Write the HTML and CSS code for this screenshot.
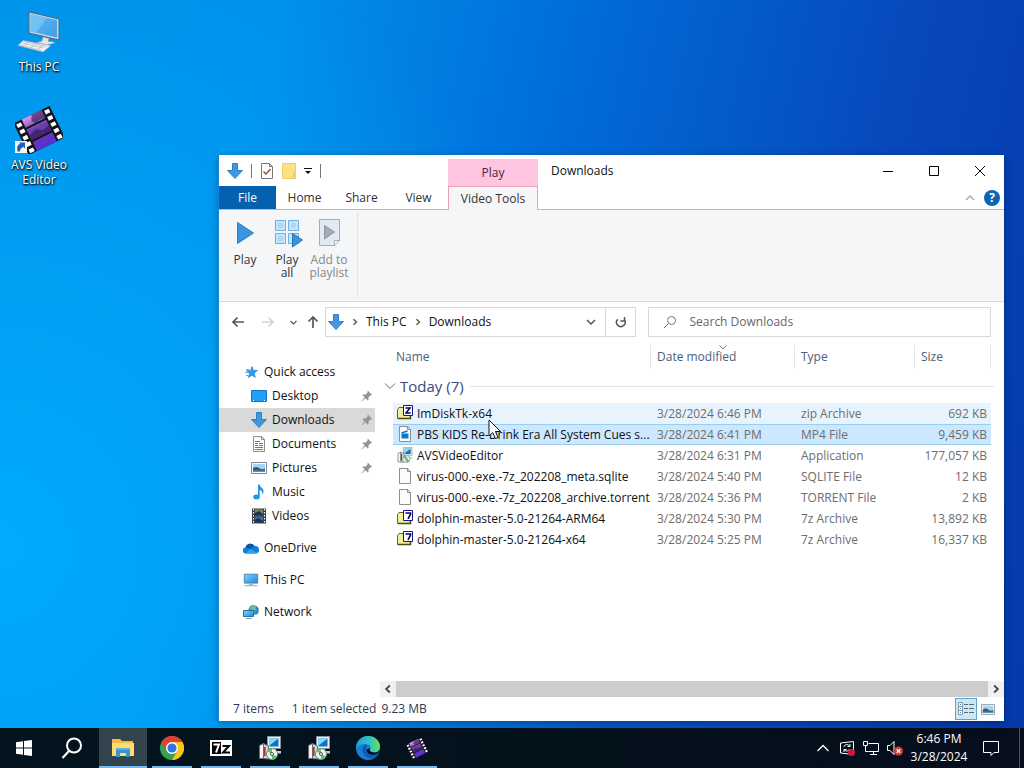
FILE: index.html
```html
<!DOCTYPE html>
<html lang="en">
<head>
    <meta charset="UTF-8">
    <meta name="viewport" content="width=device-width, initial-scale=1.0">
    <title>Downloads</title>
    <link rel="stylesheet" href="styles.css">
</head>
<body>
    <!-- Shared icons -->
    <svg class="sprite" aria-hidden="true">
        <defs>
            <linearGradient id="g-blue" x1="0" y1="0" x2="1" y2="1">
                <stop offset="0" stop-color="#7fd0fb"/><stop offset="1" stop-color="#1d8be0"/>
            </linearGradient>
            <linearGradient id="g-screen" x1="0" y1="0" x2="1" y2="1">
                <stop offset="0" stop-color="#63b9f2"/><stop offset="1" stop-color="#3f9fe6"/>
            </linearGradient>
            <linearGradient id="g-film" x1="0" y1="0" x2="0" y2="1">
                <stop offset="0" stop-color="#d99af0"/><stop offset=".4" stop-color="#6a3fa8"/><stop offset="1" stop-color="#5a2fd0"/>
            </linearGradient>
            <linearGradient id="g-edge" x1="0" y1="0" x2="1" y2="0">
                <stop offset="0" stop-color="#1b9de2"/><stop offset=".55" stop-color="#2fc3c4"/><stop offset="1" stop-color="#6bdc5a"/>
            </linearGradient>
        </defs>
        <symbol id="i-down" viewBox="0 0 16 16">
            <path d="M5.5.5h5v7h5L8 15.5.5 7.5h5z" fill="#3f98e0" stroke="#2f7fc6"/>
        </symbol>
        <symbol id="i-chev-right" viewBox="0 0 8 8">
            <path d="M2.5 1.2 5.5 4 2.5 6.8" fill="none" stroke="currentColor" stroke-width="1.4"/>
        </symbol>
        <symbol id="i-chev-down" viewBox="0 0 12 12">
            <path d="M2 4l4 4 4-4" fill="none" stroke="currentColor" stroke-width="1.5"/>
        </symbol>
        <symbol id="i-arrow" viewBox="0 0 14 14">
            <path d="M13 7H2M6.500 2.500 2 7l4.500 4.500" fill="none" stroke="currentColor" stroke-width="1.700"/>
        </symbol>
        <symbol id="i-pin" viewBox="0 0 12 12">
            <path d="M7 .8 11.200 5l-1 .6-.8-.2-2 2 .2 2.200-.9.9L4.300 8.200 1 11.200l-.4-.4 3-3.300L1.400 5.300l.9-.9 2.300.2 2-2-.2-.8z" fill="#8f959b"/>
        </symbol>
        <symbol id="i-monitor" viewBox="0 0 18 16">
            <path d="M1.500 1.500h15v10h-15z" fill="url(#g-blue)" stroke="#3d7fae"/>
            <path d="M6.500 12h5v1.500h-5z" fill="#9fb2bf"/><path d="M2 14.500h14" stroke="#7f97a6"/>
        </symbol>
        <symbol id="i-picture" viewBox="0 0 16 12">
            <path d="M.5.5h15v11H.5z" fill="#fff" stroke="#7c8b98"/>
            <path d="M2 2h12v8H2z" fill="#a9d2ee"/><path d="M2 6c3-2 5-1 7 .5S12.500 7 14 6.500V10H2z" fill="#355d78"/><path d="M2 8.500h12V10H2z" fill="#5e93b8"/>
        </symbol>
        <symbol id="i-page" viewBox="0 0 16 16">
            <path d="M2.500.5h8l3 3v12h-11z" fill="#fbfbfb" stroke="#8e8e8e"/><path d="M10.500.5v3h3" fill="none" stroke="#8e8e8e"/>
        </symbol>
        <symbol id="i-archive" viewBox="0 0 16 16">
            <path d="M.5 4.500 2 2.500h4l1 2h6.500v9H.5z" fill="#f2ee9c" stroke="#67631c"/>
            <path d="M1 13.500h12.500V11" fill="none" stroke="#4c4a12" stroke-width="1.500"/>
            <path d="M6.500.5h9v10h-9z" fill="#fff" stroke="#15158a"/>
        </symbol>
        <symbol id="i-seven" viewBox="0 0 16 16">
            <use href="#i-archive"/><path d="M8.500 3h5v1.200L11 8.800" fill="none" stroke="#000070" stroke-width="1.600"/>
        </symbol>
        <symbol id="i-zip" viewBox="0 0 16 16">
            <use href="#i-archive"/><path d="M8.500 3h4.500L9 8h4.700" fill="none" stroke="#000070" stroke-width="1.500"/>
        </symbol>
        <symbol id="i-setup" viewBox="0 0 24 24">
            <path d="M9.500.5h13v12h-13z" fill="#eef0f1" stroke="#8b9196"/>
            <path d="M11.500 2.500h9v8h-9z" fill="#0b74c4"/><path d="M11.500 2.500h9l-9 7z" fill="#7fdcff"/>
            <path d="M14 13h4v2h5v2.500h-9z" fill="#c9ced2"/>
            <path d="M1.500 9.500 5.500 7.500v15H1.500z" fill="#f5f5f5" stroke="#6a6a6a"/>
            <path d="M5.500 7.500 10.500 10v13l-5-.5z" fill="#cfd1d3" stroke="#6a6a6a"/><path d="M6.800 11v9" stroke="#b3262c" stroke-width="1.500"/>
            <circle cx="14" cy="18" r="5.500" fill="#eef5ee" stroke="#6f8f75"/>
            <path d="M14 18l-4.700-2.500A5 5 0 0 1 14 12.800zM14 18l4.700 2.500A5 5 0 0 1 14 23.200z" fill="#5cc274"/>
            <circle cx="14" cy="18" r="1.500" fill="#fff" stroke="#555"/>
        </symbol>
        <symbol id="i-film" viewBox="0 0 48 48">
            <g transform="rotate(-26 24 24)">
                <path d="M4 7h40v35H4z" fill="#15111c"/>
                <path d="M13 7h22v9H13zM13 18h22v12H13zM13 32h22v10H13z" fill="url(#g-film)"/>
                <path d="M24 7h11v9l-5-1-6 1-3-3zM13 25l8-3 7 4 7-2v6H13z" fill="#2b1748" opacity=".6"/>
                <path d="M6 9h5v4H6zM6 16h5v4H6zM6 23h5v4H6zM6 30h5v4H6zM6 37h5v4H6zM37 9h5v4h-5zM37 16h5v4h-5zM37 23h5v4h-5zM37 30h5v4h-5zM37 37h5v4h-5z" fill="#fff"/>
            </g>
        </symbol>
    </svg>

    <main class="desktop">
        <nav class="shortcuts">
            <a class="shortcut" href="#this-pc">
                <svg width="48" height="48" viewBox="0 0 48 48">
                    <path d="M14 4l30 7v21l-30-7z" fill="#c5d8e4" stroke="#4d6577"/>
                    <path d="M15.500 6 42 12v17.500l-26.500-6z" fill="url(#g-screen)"/><path d="M15.500 6 32 9.700 21 24.800l-5.500-1.300z" fill="#8fd0f7" opacity=".5"/>
                    <path d="M28 29l6 1.500-1 3h4l3 1.500-9 2-9-2.500 5-1.500z" fill="#e2e6e9" stroke="#94a0a8" stroke-width=".5"/>
                    <path d="M8 32.500l28 5-8 6.500L3 37.500z" fill="#f2f2f2" stroke="#9aa3aa" stroke-width=".6"/>
                    <path d="M7 35l22 5M9 33.500l23 5M5 37l22 5.500M14 33.500l-6 5M22 35l-7 5.500M29 36l-7 6" stroke="#aeb6bb" stroke-width=".7"/>
                </svg>
                <span>This PC</span>
            </a>
            <a class="shortcut" href="#avs">
                <svg width="48" height="48" viewBox="0 0 48 48">
                    <use href="#i-film"/>
                    <path d="M0 35h12v12H0z" fill="#f5f5f5"/><path d="M2.500 45.500c-1-5 .5-7.500 3-7.500L4 36.500h6v6L8.500 41c-2 .5-3.500 2-3.500 4.500z" fill="#1f5fae"/>
                </svg>
                <span>AVS Video Editor</span>
            </a>
        </nav>

        <section class="window">
            <header class="window-head">
                <div class="quick-bar">
                    <svg width="16" height="16"><use href="#i-down"/></svg>
                    <span class="bar"></span>
                    <button aria-label="Properties">
                        <svg width="14" height="16" viewBox="0 0 14 16"><path d="M1.500.5h8l3 3v12h-11z" fill="#fff" stroke="#777"/><path d="M9.500.5v3h3" fill="none" stroke="#777"/><path d="M3.500 8.500l2.500 2.500 4.500-5" fill="none" stroke="#8a4a30" stroke-width="1.300"/></svg>
                    </button>
                    <button aria-label="New folder">
                        <svg width="14" height="16" viewBox="0 0 14 16"><path d="M.5.5h13v15H.5z" fill="#fbe184" stroke="#ecd069"/><path d="M11 9h2.500v6.500H11z" fill="#f3cf60"/></svg>
                    </button>
                    <button aria-label="Customize toolbar">
                        <svg width="8" height="8" viewBox="0 0 8 8"><path d="M0 1.500h8" stroke="#111"/><path d="M1 4h6L4 7z" fill="#111"/></svg>
                    </button>
                    <span class="bar"></span>
                </div>
                <div class="context-tab">Play</div>
                <div class="title-bar">
                    <h1>Downloads</h1>
                    <button class="caption" aria-label="Minimize"><svg width="10" height="10"><path d="M0 5.500h10" stroke="#000"/></svg></button>
                    <button class="caption" aria-label="Maximize"><svg width="10" height="10"><path d="M.5.5h9v9h-9z" fill="none" stroke="#000"/></svg></button>
                    <button class="caption" aria-label="Close"><svg width="10" height="10"><path d="M0 0l10 10M10 0 0 10" stroke="#000"/></svg></button>
                </div>
                <div class="tabs">
                    <button class="tab file">File</button>
                    <button class="tab">Home</button>
                    <button class="tab">Share</button>
                    <button class="tab">View</button>
                </div>
                <button class="tab active">Video Tools</button>
                <div class="tab-tools">
                    <button aria-label="Minimize the ribbon"><svg width="10" height="8" viewBox="0 0 10 8"><path d="M1 6l4-4 4 4" fill="none" stroke="#a8adb2" stroke-width="1.500"/></svg></button>
                    <button class="help" aria-label="Help">?</button>
                </div>
            </header>

            <div class="ribbon">
                <div class="ribbon-group">
                    <button class="ribbon-button">
                        <svg width="32" height="32" viewBox="0 0 32 32"><path d="M8.500 5.500l16 10.500-16 10.500z" fill="#3c94df" stroke="#2a7cc4"/></svg>
                        <span>Play</span>
                    </button>
                    <button class="ribbon-button">
                        <svg width="32" height="32" viewBox="0 0 32 32">
                            <path d="M4.500 3.500h10v10h-10zM17.500 3.500h10v10h-10zM4.500 16.500h10v10h-10zM17.500 16.500h10v10h-10z" fill="#c4e6fa" stroke="#6fb1dc"/>
                            <path d="M7 6h5v5H7zM20 6h5v5h-5zM7 19h5v5H7z" fill="#a9d9f6"/>
                            <path d="M21.500 16.500l10 6.500-10 7z" fill="#3c94df" stroke="#2a72b8"/>
                        </svg>
                        <span>Play all</span>
                    </button>
                    <button class="ribbon-button" disabled>
                        <svg width="32" height="32" viewBox="0 0 32 32">
                            <path d="M6.500 2.500h20v21l-5 5h-15z" fill="#e3e9f1" stroke="#a2adba"/><path d="M21.500 28.500v-5h5z" fill="#fff" stroke="#a2adba"/>
                            <path d="M11.500 8.500l10 6.500-10 7z" fill="#a3abb6" stroke="#8f98a5"/>
                        </svg>
                        <span>Add to playlist</span>
                    </button>
                </div>
            </div>

            <div class="nav-bar">
                <button class="nav-button" aria-label="Back"><svg width="14" height="14"><use href="#i-arrow"/></svg></button>
                <button class="nav-button" aria-label="Forward" disabled><svg class="flip" width="14" height="14"><use href="#i-arrow"/></svg></button>
                <button class="nav-button narrow" aria-label="Recent locations"><svg width="9" height="9"><use href="#i-chev-down"/></svg></button>
                <button class="nav-button narrow" aria-label="Up"><svg class="up" width="14" height="14"><use href="#i-arrow"/></svg></button>
                <div class="address">
                    <svg width="16" height="16"><use href="#i-down"/></svg>
                    <svg width="8" height="8"><use href="#i-chev-right"/></svg>
                    <a href="#this-pc">This PC</a>
                    <svg width="8" height="8"><use href="#i-chev-right"/></svg>
                    <a href="#downloads">Downloads</a>
                    <button class="address-drop" aria-label="Previous locations"><svg width="12" height="12"><use href="#i-chev-down"/></svg></button>
                    <button class="refresh" aria-label="Refresh">
                        <svg width="12" height="12" viewBox="0 0 12 12"><path d="M2.800 3.200A4.300 4.300 0 1 0 9.500 4" fill="none" stroke="currentColor" stroke-width="1.500"/><path d="M2.500 1v4h4" fill="none" stroke="currentColor" stroke-width="1.500" transform="matrix(-1 0 0 1 12 0)"/></svg>
                    </button>
                </div>
                <label class="search">
                    <svg width="14" height="14" viewBox="0 0 14 14"><circle cx="8.500" cy="5.500" r="4" fill="none" stroke="#777"/><path d="M5.500 8.500 1 13" stroke="#777"/></svg>
                    <input type="text" aria-label="Search Downloads" placeholder="Search Downloads">
                </label>
            </div>

            <div class="window-body">
                <nav class="sidebar">
                    <a class="root" href="#quick"><svg width="16" height="16" viewBox="0 0 16 16"><path d="M9 2.500l1.300 3.700 4.200.3-3.300 2.700 1.200 4.300L9 11.300 5.200 13.500 6.500 9.500 3.500 6.700l4.200-.5z" fill="#2e9be6" stroke="#1c7fc7" stroke-width=".6"/><path d="M3 5.500h3M2 8.500h3M3 11.500h2" stroke="#5eb2e8"/></svg>Quick access</a>
                    <a href="#desktop"><svg width="16" height="16" viewBox="0 0 16 16"><path d="M.5 2.500h15v11H.5z" fill="#1ea0fb" stroke="#1474bd"/><path d="M2 12.500h1M13 12.500h1" stroke="#fff"/></svg>Desktop<svg class="pin" width="12" height="12"><use href="#i-pin"/></svg></a>
                    <a class="current" href="#downloads"><svg width="16" height="16"><use href="#i-down"/></svg>Downloads<svg class="pin" width="12" height="12"><use href="#i-pin"/></svg></a>
                    <a href="#documents"><svg width="16" height="16"><use href="#i-page"/><path d="M4 5.500h5M4 7.500h3M8 7.500h4M4 9.500h3M8 9.500h4M4 11.500h8M4 13.500h8" stroke="#2a93bd"/></svg>Documents<svg class="pin" width="12" height="12"><use href="#i-pin"/></svg></a>
                    <a href="#pictures"><svg width="16" height="12"><use href="#i-picture"/></svg>Pictures<svg class="pin" width="12" height="12"><use href="#i-pin"/></svg></a>
                    <a href="#music"><svg width="16" height="16" viewBox="0 0 16 16"><ellipse cx="5.500" cy="13" rx="3.200" ry="2.500" fill="#1d97e8"/><path d="M7 13V.5h1.700c.3 3 4.300 3.500 3.800 7.500-.2 1-.7 2-1.200 2.500.3-2.500-.8-4-2.600-4.500v7z" fill="#1d97e8"/></svg>Music</a>
                    <a href="#videos"><svg width="16" height="16" viewBox="0 0 16 16"><path d="M1 .5h14v15H1z" fill="#39424c"/><path d="M4 1.500h8v6H4z" fill="#7e8a52"/><path d="M4 8.500h8v6H4z" fill="#3e6b9c"/><path d="M4 5l4-2 4 3v1.500H4zM4 12l3-2 5 3v1.500H4z" fill="#20304e"/><path d="M2.500 1v14M13.500 1v14" stroke="#fff" stroke-dasharray="1.500 1.500"/></svg>Videos</a>
                    <a class="root spaced" href="#onedrive"><svg width="16" height="16" viewBox="0 0 16 16"><path d="M3 13.500a3 3 0 0 1-.5-6 5 5 0 0 1 9-1.500 3.800 3.800 0 0 1 1.500 7.500z" fill="#1180d8"/><path d="M2.500 7.500a5 5 0 0 1 9-1.500L7 9z" fill="#0a57a8"/><path d="M3 13.500 7 9l7.500 4-1.500.5z" fill="#2ea6ee"/></svg>OneDrive</a>
                    <a class="root spaced" href="#this-pc"><svg width="16" height="16"><use href="#i-monitor"/></svg>This PC</a>
                    <a class="root spaced" href="#network"><svg width="16" height="16" viewBox="0 0 16 16"><circle cx="10.500" cy="6" r="5" fill="#3f8fb9"/><path d="M6 4l5-3 3 3-3 3z" fill="#74b6b0"/><path d="M.5 6.500h10v6H.5z" fill="url(#g-blue)" stroke="#2a6f9f"/><path d="M3 14.500h5.500" stroke="#7f97a6"/><path d="M13 2.500l2.500 1.500v5L13 11z" fill="#3c87b4"/></svg>Network</a>
                </nav>

                <div class="content">
                    <table class="files">
                        <colgroup><col class="col-name"><col class="col-date"><col class="col-type"><col></colgroup>
                        <thead>
                            <tr>
                                <th>Name</th>
                                <th class="sorted">Date modified<svg width="8" height="5" viewBox="0 0 8 5"><path d="M.5.5 4 4 7.500.5" fill="none" stroke="#777"/></svg></th>
                                <th>Type</th>
                                <th>Size</th>
                            </tr>
                        </thead>
                        <tbody>
                            <tr class="group"><td colspan="4"><div><svg width="12" height="12" viewBox="0 0 12 12"><path d="M1 3.500l5 5 5-5" fill="none" stroke="#666"/></svg>Today (7)</div></td></tr>
                            <tr class="hovered"><td><svg width="16" height="16"><use href="#i-zip"/></svg>ImDiskTk-x64</td><td>3/28/2024 6:46 PM</td><td>zip Archive</td><td>692 KB</td></tr>
                            <tr class="selected"><td><svg width="16" height="16"><use href="#i-page"/><path d="M4.500 7.500h7v5h-7z" fill="#0a78d0"/><path d="M4.500 7l6-2" stroke="#0a78d0" stroke-width="1.500"/></svg>PBS KIDS Re-Drink Era All System Cues s...</td><td>3/28/2024 6:41 PM</td><td>MP4 File</td><td>9,459 KB</td></tr>
                            <tr><td><svg width="16" height="16"><use href="#i-setup"/></svg>AVSVideoEditor</td><td>3/28/2024 6:31 PM</td><td>Application</td><td>177,057 KB</td></tr>
                            <tr><td><svg width="16" height="16"><use href="#i-page"/></svg>virus-000.-exe.-7z_202208_meta.sqlite</td><td>3/28/2024 5:40 PM</td><td>SQLITE File</td><td>12 KB</td></tr>
                            <tr><td><svg width="16" height="16"><use href="#i-page"/></svg>virus-000.-exe.-7z_202208_archive.torrent</td><td>3/28/2024 5:36 PM</td><td>TORRENT File</td><td>2 KB</td></tr>
                            <tr><td><svg width="16" height="16"><use href="#i-seven"/></svg>dolphin-master-5.0-21264-ARM64</td><td>3/28/2024 5:30 PM</td><td>7z Archive</td><td>13,892 KB</td></tr>
                            <tr><td><svg width="16" height="16"><use href="#i-seven"/></svg>dolphin-master-5.0-21264-x64</td><td>3/28/2024 5:25 PM</td><td>7z Archive</td><td>16,337 KB</td></tr>
                        </tbody>
                    </table>
                    <div class="scrollbar">
                        <button aria-label="Scroll left"><svg class="flip" width="10" height="10"><use href="#i-chev-right"/></svg></button>
                        <div class="thumb"></div>
                        <button aria-label="Scroll right"><svg width="10" height="10"><use href="#i-chev-right"/></svg></button>
                    </div>
                </div>
            </div>

            <footer class="status">
                <span>7 items</span>
                <span class="picked">1 item selected</span>
                <span>9.23 MB</span>
                <div class="views">
                    <button class="on" aria-label="Details view"><svg width="16" height="14" viewBox="0 0 16 14"><path d="M.5.5h4v12h-4zM.5 4.500h4M.5 8.500h4" fill="#fff" stroke="#8a97a0"/><path d="M2 2.500h1M2 6.500h1M2 10.500h1" stroke="#2b80b8"/><path d="M6 2.500h4M11 2.500h5M6 6.500h4M11 6.500h5M6 10.500h4M11 10.500h5" stroke="#5c6a74"/></svg></button>
                    <button aria-label="Large icons view"><svg width="14" height="11"><use href="#i-picture"/></svg></button>
                </div>
            </footer>
        </section>

        <svg class="cursor" width="14" height="21" viewBox="0 0 14 21"><path d="M1 1v16l3.700-3.500L7.500 19.500l2.500-1L7.500 12.500h5z" fill="#fff" stroke="#111"/></svg>
    </main>

    <footer class="taskbar">
        <button class="task start" aria-label="Start"><svg width="16" height="16" viewBox="0 0 16 16"><path d="M0 2.200 7 1.200v6.300H0zM8 1.100 16 0v7.500H8zM0 8.500h7v6.300l-7-1zM8 8.500h8V16l-8-1.100z" fill="#fff"/></svg></button>
        <button class="task" aria-label="Search"><svg width="22" height="22" viewBox="0 0 22 22"><circle cx="13" cy="8.500" r="7" fill="none" stroke="#fff" stroke-width="2"/><path d="M8 14l-6.500 7" stroke="#fff" stroke-width="2.200"/></svg></button>
        <button class="task running front" aria-label="File Explorer"><svg width="24" height="22" viewBox="0 0 24 22"><path d="M1 2h8l2 2h11v15H1z" fill="#f2bd3e"/><path d="M1 6h22v13H1z" fill="#fddc70"/><path d="M5 11h14v9h-4v-4H9v4H5z" fill="#3b93cd"/><path d="M5 11h14v2H5z" fill="#5bb0e2"/></svg></button>
        <button class="task running" aria-label="Chrome"><svg width="24" height="24" viewBox="0 0 24 24"><circle cx="12" cy="12" r="12" fill="#33a352"/><path d="M12 12 1.600 6A12 12 0 0 1 22.400 6z" fill="#e53e31"/><path d="M1.600 6 6.800 15 12 12V6z" fill="#e53e31"/><path d="M22.400 6A12 12 0 0 1 12 24l5.200-9L12 6z" fill="#fcc51c"/><circle cx="12" cy="12" r="6" fill="#fff"/><circle cx="12" cy="12" r="4.600" fill="#3275e0"/></svg></button>
        <button class="task running" aria-label="7-Zip"><svg width="22" height="16" viewBox="0 0 22 16"><path d="M0 0h22v16H0z" fill="#fff"/><path d="M2 2h9v12H2z" fill="#050505"/><path d="M3.500 4.500H9L6 12.500" fill="none" stroke="#fff" stroke-width="2"/><path d="M12.500 6H19l-6 6.500h7" fill="none" stroke="#050505" stroke-width="2"/></svg></button>
        <button class="task running" aria-label="Setup"><svg width="24" height="24"><use href="#i-setup"/></svg></button>
        <button class="task running" aria-label="Setup"><svg width="24" height="24"><use href="#i-setup"/></svg></button>
        <button class="task running" aria-label="Edge"><svg width="24" height="24" viewBox="0 0 24 24"><circle cx="12" cy="12" r="12" fill="#1680d4"/><path d="M.2 10.500C1 4.500 6 0 12 0c7 0 12 5 12 10.500 0 4-3 6-6 6-3.500 0-5-1.500-4-3 1.500-2.500 0-5.500-4-5.500C5 8 1.500 10 .2 13z" fill="url(#g-edge)"/><path d="M10 8c-3 1.500-4.500 5-3 8.500 1.500 4 5 6 9 6 2.500-.8 4.500-2.500 6-5-6 2.500-13 1-12-4.500.2-1 .6-1.500 1-2z" fill="#1459ac"/><path d="M14.300 12c-1.300 1.500-.8 4 3.700 4.500 3 .2 4.600-1 6-3.500-.3 1.800-1 3.300-2 4.600-4 2.200-12 1.400-11.500-4.100z" fill="#03131d"/></svg></button>
        <button class="task running" aria-label="AVS Video Editor"><svg width="22" height="22"><use href="#i-film"/></svg></button>

        <div class="tray">
            <button aria-label="Show hidden icons"><svg width="14" height="14" viewBox="0 0 14 14"><path d="M1.500 10 7 4.500l5.500 5.500" fill="none" stroke="#fff" stroke-width="1.300"/></svg></button>
            <button aria-label="Update"><svg width="16" height="16" viewBox="0 0 16 16"><path d="M1.500 3l13-1.500v13L1.500 13z" fill="none" stroke="#fff"/><path d="M5 7c.5-3 4-3 5.500-1M11 4v2.500H8.500M10.500 9c-.5 2.500-4 2.500-5 .8M5 12V9.500h2.500" fill="none" stroke="#fff"/><circle cx="12.500" cy="12.500" r="3.500" fill="#d6143c"/></svg></button>
            <button aria-label="Network"><svg width="16" height="16" viewBox="0 0 16 16"><path d="M5.500 3.500h10v8h-10M10.500 11.500v3M7 14.500h7M.5 1.500h4v4h-4zM2.500 5.500v6h3" fill="none" stroke="#fff"/></svg></button>
            <button aria-label="Volume"><svg width="16" height="16" viewBox="0 0 16 16"><path d="M.5 5.500h2.500l4-4v13l-4-4H.5z" fill="none" stroke="#fff"/><circle cx="11.500" cy="11" r="4.500" fill="#d23b3b"/><path d="M9.700 9.200l3.600 3.600M13.300 9.200l-3.600 3.600" stroke="#fff" stroke-width="1.300"/></svg></button>
            <time class="clock"><span>6:46 PM</span><span>3/28/2024</span></time>
            <button class="notify" aria-label="Notifications"><svg width="16" height="16" viewBox="0 0 16 16"><path d="M.5 1.500h15v11H11l-3 3v-3H.5z" fill="none" stroke="#fff"/></svg></button>
            <button class="peek" aria-label="Show desktop"></button>
        </div>
    </footer>
</body>
</html>
```
FILE: styles.css
```css
* {
    margin: 0;
    padding: 0;
    box-sizing: border-box;
}

body {
    display: flex;
    flex-direction: column;
    height: 100vh;
    overflow: hidden;
    font-family: "Open Sans", "Noto Sans", sans-serif;
    font-size: 12px;
    line-height: 16px;
    color: #111;
    background: #0a7fe0;
}

button,
input {
    font: inherit;
    color: inherit;
    background: none;
    border: none;
}

button {
    display: flex;
    align-items: center;
    justify-content: center;
}

a {
    color: inherit;
    text-decoration: none;
}

svg {
    flex: none;
}

.sprite {
    position: absolute;
    width: 0;
    height: 0;
}

.flip {
    transform: scaleX(-1);
}

.up {
    transform: rotate(90deg);
}

/* Desktop */
.desktop {
    position: relative;
    flex: 1;
    background:
        radial-gradient(ellipse 60% 90% at 0% 75%, rgba(0, 174, 255, 0.9), rgba(0, 160, 248, 0) 100%),
        linear-gradient(102deg, #0090e8 0%, #0090ec 24%, #006cd8 50%, #0748bc 78%, #0439aa 100%);
}

.shortcuts {
    display: flex;
    flex-direction: column;
    gap: 18px;
    width: 78px;
    padding-top: 8px;
}

.shortcut {
    display: flex;
    flex-direction: column;
    align-items: center;
    gap: 3px;
    min-height: 80px;
    padding: 0 8px;
    line-height: 15px;
    text-align: center;
    color: #fff;
    text-shadow: 1px 1px 2px #000, 0 1px 2px rgba(0, 0, 0, 0.8);
}

.cursor {
    position: absolute;
    left: 488px;
    top: 419px;
}

/* Explorer window */
.window {
    position: absolute;
    left: 218px;
    top: 155px;
    right: 20px;
    bottom: 7px;
    display: flex;
    flex-direction: column;
    background: #fff;
    border-left: 1px solid #1883d7;
    box-shadow: 0 2px 8px rgba(0, 0, 0, 0.3);
}

.window-head {
    display: grid;
    grid-template-columns: 229px 90px 1fr;
    grid-template-rows: 31px 24px;
}

.quick-bar {
    display: flex;
    align-items: center;
    gap: 8px;
    padding-left: 8px;
}

.bar {
    width: 1px;
    height: 14px;
    background: #777;
}

.context-tab {
    display: flex;
    align-items: center;
    justify-content: center;
    margin-top: 4px;
    background: #fec5e0;
    color: #4b2438;
}

.title-bar {
    display: flex;
    padding-left: 13px;
    padding-right: 1px;
}

.title-bar h1 {
    flex: 1;
    font-size: 12px;
    font-weight: 400;
    line-height: 31px;
}

.caption {
    width: 46px;
}

.tabs {
    display: flex;
    border-bottom: 1px solid #e9a3b5;
}

.tab {
    width: 57px;
    color: #333;
}

.tab.file {
    background: #0560b0;
    color: #fff;
}

.tab.active {
    width: auto;
    background: #f5f6f7;
    border: 1px solid #e9a3b5;
    border-bottom: none;
}

.tab-tools {
    display: flex;
    align-items: center;
    justify-content: flex-end;
    gap: 9px;
    padding-right: 4px;
    border-bottom: 1px solid #e9a3b5;
}

.help {
    width: 16px;
    height: 16px;
    border-radius: 50%;
    background: #0a66b4;
    color: #fff;
    font-weight: 700;
}

.ribbon {
    height: 92px;
    padding: 3px 5px;
    background: #f5f6f7;
    border-bottom: 1px solid #dadbdc;
}

.ribbon-group {
    display: flex;
    width: 134px;
    height: 100%;
    border-right: 1px solid #e2e3e4;
}

.ribbon-button {
    flex-direction: column;
    justify-content: flex-start;
    gap: 4px;
    width: 42px;
    padding-top: 4px;
    line-height: 13px;
    color: #333;
}

.ribbon-button span {
    padding: 0 2px;
}

.ribbon-button:disabled {
    color: #84888c;
}

.nav-bar {
    display: flex;
    align-items: center;
    height: 40px;
    padding: 0 13px 0 4px;
    color: #555;
}

.nav-button {
    width: 30px;
    height: 30px;
}

.nav-button.narrow {
    width: 20px;
}

.nav-button:disabled {
    color: #d3d3d3;
}

.address {
    display: flex;
    flex: 307;
    align-items: center;
    gap: 7px;
    height: 30px;
    margin-left: 2px;
    padding-left: 2px;
    border: 1px solid #d9d9d9;
}

.address a {
    color: #111;
}

.address-drop {
    width: 14px;
    margin-left: auto;
}

.refresh {
    width: 30px;
    height: 100%;
    border-left: 1px solid #d9d9d9;
}

.search {
    display: flex;
    flex: 326;
    align-items: center;
    gap: 12px;
    height: 30px;
    margin-left: 12px;
    padding-left: 14px;
    border: 1px solid #d9d9d9;
}

.search input {
    flex: 1;
    min-width: 0;
}

.search input::placeholder {
    color: #666;
    opacity: 1;
}

.window-body {
    display: flex;
    flex: 1;
    min-height: 0;
}

/* Navigation pane */
.sidebar {
    width: 161px;
    padding: 18px 5px 0 0;
}

.sidebar a {
    display: flex;
    align-items: center;
    gap: 5px;
    height: 24px;
    padding: 0 2px 0 32px;
}

.sidebar .root {
    padding-left: 24px;
}

.sidebar .spaced {
    margin-top: 8px;
}

.sidebar .current {
    background: #d9d9d9;
}

.pin {
    margin-left: auto;
}

/* File list */
.content {
    display: flex;
    flex: 1;
    flex-direction: column;
    justify-content: space-between;
    min-width: 0;
}

.files {
    width: auto;
    margin: 3px 13px 0;
    table-layout: fixed;
    border-spacing: 0;
    color: #6d6d6d;
}

.col-name {
    width: 258px;
}

.col-date {
    width: 144px;
}

.col-type {
    width: 120px;
}

.files th {
    height: 24px;
    padding-left: 6px;
    text-align: left;
    font-weight: 400;
    color: #4c607a;
    border-right: 1px solid #e5e5e5;
}

.files th:first-child {
    padding-left: 3px;
}

.sorted {
    position: relative;
}

.sorted svg {
    position: absolute;
    left: 50%;
    top: 0;
    margin-left: -4px;
}

.files td {
    height: 21px;
    padding-left: 6px;
    white-space: nowrap;
    line-height: 19px;
    border: 0 solid transparent;
    border-width: 1px 0;
}

.files td:first-child {
    padding-left: 4px;
    color: #111;
}

.files td:last-child {
    padding-right: 4px;
    text-align: right;
}

.files td svg {
    margin-right: 4px;
    vertical-align: -3px;
}

.files .group td {
    height: 34px;
    padding: 0;
}

.group div {
    display: flex;
    align-items: center;
    margin: 0 -3px 0 -9px;
    font-size: 15px;
    color: #3c4a7d;
}

.group div::after {
    content: "";
    flex: 1;
    height: 1px;
    margin-left: 6px;
    background: #e2e2e2;
}

.hovered {
    background: #e8f4fd;
}

.selected {
    background: #cce8ff;
}

.files .selected td {
    border-color: #9dcdec;
}

.scrollbar {
    display: flex;
    height: 16px;
    background: #f0f0f0;
    color: #444;
}

.scrollbar button {
    width: 16px;
}

.thumb {
    flex: 1;
    background: #cdcdcd;
}

.status {
    display: flex;
    align-items: center;
    height: 24px;
    padding: 0 5px 0 14px;
    color: #2c3a52;
}

.picked {
    margin: 0 5px 0 18px;
}

.views {
    display: flex;
    margin-left: auto;
}

.views button {
    width: 22px;
    height: 22px;
}

.views .on {
    background: #cce8f6;
    border: 1px solid #5aa5cb;
}

/* Taskbar */
.taskbar {
    display: flex;
    height: 40px;
    gap: 1px;
    background: linear-gradient(90deg, #04151f, #03111b 60%, #070d1c);
    color: #fff;
}

.task {
    position: relative;
    width: 48px;
}

.start {
    margin-right: -1px;
}

.running::after {
    content: "";
    position: absolute;
    left: 4px;
    right: 4px;
    bottom: 0;
    height: 2px;
    background: #76b9ed;
}

.front {
    margin-left: 2px;
    background: #33444f;
}

.front::after {
    left: 0;
    right: 0;
}

.tray {
    display: flex;
    align-items: center;
    margin-left: auto;
}

.tray button {
    width: 24px;
    height: 40px;
}

.clock {
    display: flex;
    flex-direction: column;
    width: 64px;
    line-height: 18px;
    text-align: center;
}

.tray .notify {
    width: 40px;
}

.tray .peek {
    width: 5px;
    margin-left: 8px;
    border-left: 1px solid #4a5563;
}
```
